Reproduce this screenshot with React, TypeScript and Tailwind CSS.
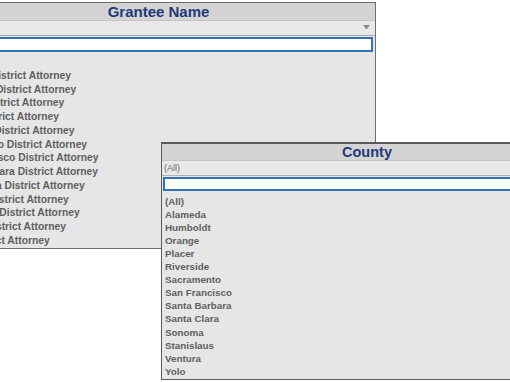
import React from "react";

const counties = [
  "Alameda",
  "Humboldt",
  "Orange",
  "Placer",
  "Riverside",
  "Sacramento",
  "San Francisco",
  "Santa Barbara",
  "Santa Clara",
  "Sonoma",
  "Stanislaus",
  "Ventura",
  "Yolo",
];

const font = { fontFamily: '"Liberation Sans", Arial, sans-serif' };

export default function App() {
  return (
    <div
      className="relative w-[510px] h-[382px] bg-white overflow-hidden"
      style={font}
    >
      {/* Grantee Name panel */}
      <div className="absolute left-[-59px] top-[2px] w-[435px] h-[247px] border border-[#6e6e6e] bg-[#e6e6e6] flex flex-col">
        <div className="h-[18px] bg-[#d4d4d4] border-b border-[#c4c4c4] flex items-center justify-center">
          <span className="text-[15px] font-bold leading-none text-[#1f3a78]">
            Grantee Name
          </span>
        </div>
        <div className="h-[15px] bg-[#e8e8e8] border-b border-[#a9a9a9] flex items-center justify-end pr-[5px]">
          <svg width="7" height="5" viewBox="0 0 7 5">
            <path d="M0 0 L7 0 L3.5 4.5 Z" fill="#8a8a8a" />
          </svg>
        </div>
        <div className="mx-[2px] mt-[1px] h-[15px] border-2 border-[#3172b8] bg-white" />
        <div className="flex flex-col pt-[4px] pl-[3px]">
          {["(All)", ...counties.map((c) => `${c} District Attorney`)].map(
            (t) => (
              <div
                key={t}
                className="h-[13.75px] flex items-center text-[10.3px] font-bold leading-none text-[#606060] whitespace-nowrap"
              >
                {t}
              </div>
            )
          )}
        </div>
      </div>

      {/* County panel */}
      <div className="absolute left-[161px] top-[142px] w-[412px] h-[238px] border border-[#5a5a5a] border-t-2 bg-[#e6e6e6] flex flex-col">
        <div className="h-[17px] bg-[#d4d4d4] border-b border-[#c4c4c4] flex items-center justify-center">
          <span className="text-[14.5px] font-bold leading-none text-[#1f3a78]">
            County
          </span>
        </div>
        <div className="h-[15px] bg-[#e8e8e8] border-b border-[#b0b0b0] flex items-center pl-[2px]">
          <span className="text-[9px] leading-none text-[#6a6a6a]">(All)</span>
        </div>
        <div className="mx-[1px] mt-[1px] h-[14px] border-2 border-[#3172b8] bg-white" />
        <div className="flex flex-col pt-[4px] pl-[3px]">
          {["(All)", ...counties].map((t) => (
            <div
              key={t}
              className="h-[13.1px] flex items-center text-[9.8px] font-bold leading-none text-[#606060] whitespace-nowrap"
            >
              {t}
            </div>
          ))}
        </div>
      </div>
    </div>
  );
}
